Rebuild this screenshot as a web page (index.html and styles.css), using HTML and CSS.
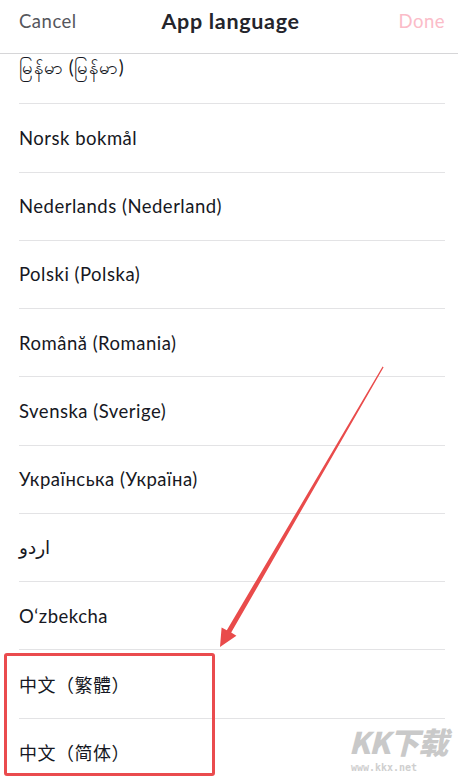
FILE: index.html
```html
<!DOCTYPE html>
<html>
<head>
<meta charset="utf-8">
<link rel="stylesheet" href="styles.css">
</head>
<body>
<div class="screen">
  <header class="topbar">
    <span class="cancel">Cancel</span>
    <span class="title">App language</span>
    <span class="done">Done</span>
  </header>
  <div class="viewport">
    <ul class="list">
      <li class="row">မြန်မာ (မြန်မာ)</li>
      <li class="row">Norsk bokmål</li>
      <li class="row">Nederlands (Nederland)</li>
      <li class="row">Polski (Polska)</li>
      <li class="row">Română (Romania)</li>
      <li class="row">Svenska (Sverige)</li>
      <li class="row">Українська (Україна)</li>
      <li class="row">اردو</li>
      <li class="row">O‘zbekcha</li>
      <li class="row cjk">中文（繁體）</li>
      <li class="row cjk">中文（简体）</li>
    </ul>
  </div>
  <div class="highlight"></div>
  <svg class="arrow" width="458" height="781" viewBox="0 0 458 781">
    <polygon fill="#e94b4b" points="383.6,367.2 382.6,366.6 226.8,630.2 221.6,627.4 220,647 236.4,635.8 231.2,632.6"/>
  </svg>
  <div class="watermark">
    <span class="wm-logo">KK下载</span>
    <span class="wm-url">www.kkx.net</span>
  </div>
</div>
</body>
</html>
```
FILE: styles.css
```css
* { box-sizing: border-box; }
html, body { margin: 0; padding: 0; background: #fff; }
body {
  font-family: "Lato", "Noto Sans", "DejaVu Sans", "Noto Sans CJK SC", sans-serif;
  color: #161823;
}
.screen {
  position: relative;
  width: 458px;
  height: 781px;
  overflow: hidden;
}
.topbar {
  height: 54px;
  border-bottom: 1px solid #d6d6d8;
  display: flex;
  align-items: center;
  justify-content: space-between;
  padding: 0 13px 12px 19px;
  background: #fff;
}
.cancel { font-size: 18.5px; color: #55565c; letter-spacing: 0.5px; }
.title { font-size: 21.5px; font-weight: 700; color: #24252c; margin-right: 14px; letter-spacing: 0.7px; }
.done { font-size: 18.5px; color: #fbbcc8; letter-spacing: 0.5px; }
.viewport {
  height: 727px;
  overflow: hidden;
}
.list {
  list-style: none;
  margin: -18px 0 0 0;
  padding: 0 13px 0 19px;
}
.row {
  height: 68.25px;
  border-bottom: 1px solid #e3e3e5;
  display: flex;
  align-items: center;
  font-size: 18.5px;
  letter-spacing: 0.5px;
}
.cjk {
  font-family: "Noto Sans CJK SC", "Noto Sans CJK TC", sans-serif;
  font-size: 18px;
  letter-spacing: 0.5px;
}
.highlight {
  position: absolute;
  left: 4px;
  top: 653px;
  width: 211px;
  height: 123px;
  border: 3px solid #ea4b4e;
  border-radius: 3px;
}
.arrow {
  position: absolute;
  left: 0;
  top: 0;
}
.watermark {
  position: absolute;
  left: 338px;
  top: 724px;
  width: 120px;
  display: flex;
  flex-direction: column;
  align-items: center;
  color: #c9c9c9;
}
.wm-logo {
  font-family: "Noto Sans CJK SC", sans-serif;
  font-size: 30px;
  font-weight: 900;
  line-height: 34px;
  letter-spacing: -1px;
  font-style: italic;
}
.wm-url {
  font-family: "DejaVu Sans Mono", monospace;
  font-size: 10px;
  font-weight: 700;
  line-height: 12px;
  margin-top: 4px;
  margin-left: -28px;
  color: #cfcfcf;
}
```
